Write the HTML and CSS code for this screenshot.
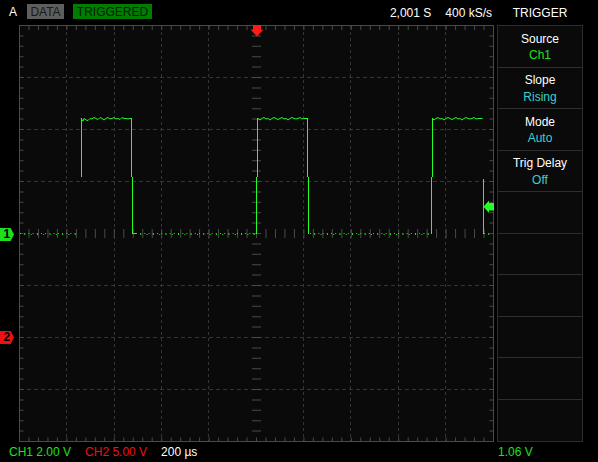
FILE: index.html
```html
<!DOCTYPE html>
<html>
<head>
<meta charset="utf-8">
<link rel="stylesheet" href="styles.css">
</head>
<body>
<div class="scope">
  <header class="top">
    <div class="top-main">
      <div class="status">
        <span class="chan">A</span>
        <span class="badge badge-data">DATA</span>
        <span class="badge badge-trig">TRIGGERED</span>
      </div>
      <div class="metrics">
        <span>2,001 S</span>
        <span>400 kS/s</span>
      </div>
    </div>
    <div class="menu-title">TRIGGER</div>
  </header>

  <main class="main">
    <div class="markers">
      <div class="mk mk1">1</div>
      <div class="mk mk2">2</div>
    </div>

    <svg class="grat" viewBox="19 25 475 417" xmlns="http://www.w3.org/2000/svg">
      <rect x="19" y="25" width="475" height="417" fill="#0a0a0a"/>
      <g stroke="#363636" stroke-width="1" fill="none">
        <path stroke-dasharray="3 3" d="M66.5 26V441M114.5 26V441M161.5 26V441M208.5 26V441M303.5 26V441M350.5 26V441M398.5 26V441M445.5 26V441"/>
        <path stroke-dasharray="4 3" d="M20 77.5H493M20 129.5H493M20 181.5H493M20 285.5H493M20 337.5H493M20 389.5H493"/>
      </g>
      <g stroke="#4a4a4a" fill="none">
        <line x1="19" y1="28" x2="494" y2="28" stroke-width="4" stroke-dasharray="1 8.48"/>
        <line x1="19" y1="439.5" x2="494" y2="439.5" stroke-width="4" stroke-dasharray="1 8.48"/>
        <line x1="21.5" y1="25" x2="21.5" y2="442" stroke-width="4" stroke-dasharray="1 9.4"/>
        <line x1="491.5" y1="25" x2="491.5" y2="442" stroke-width="4" stroke-dasharray="1 9.4"/>
        <line x1="256.5" y1="25" x2="256.5" y2="442" stroke-width="9" stroke-dasharray="1 9.4"/>
        <line x1="19" y1="233.5" x2="494" y2="233.5" stroke-width="9" stroke-dasharray="1 8.48"/>
        <rect x="19.5" y="25.5" width="474" height="416" stroke-width="1"/>
      </g>

      <g stroke="#22ff22" stroke-width="1" fill="none" shape-rendering="crispEdges">
        <path d="M81.5 118V177M131.5 118V177M132.5 177V234M256.5 234V177M257.5 177V118M307.5 118V177M308.5 177V234M431.5 234V177M432.5 177V118M483.5 179V234"/>
      </g>
      <g stroke="#22ff22" stroke-width="1" fill="none">
        <polyline points="81,118.5 83,121 84,118.5 86,120 88,120.5 90,118.5 92,119 94,117.5 96,118.5 98,119.5 100,117.5 102,118.5 104,120 106,118.5 108,117.5 110,119 112,118.5 114,117.5 116,119 118,118.5 120,119.5 122,117.5 124,118.5 126,118.5 128,119 130,118.5 131.5,118.5"/>
        <polyline points="258,118.5 260,120 262,118.5 264,117.5 266,119 268,118.5 270,120 272,118.5 274,117.5 276,118.5 278,119.5 280,118.5 282,117.5 284,119 286,118.5 288,120 290,118.5 292,117.5 294,118.5 296,119 298,118.5 300,117.5 302,119 304,118.5 306,118.5 307.5,118.5"/>
        <polyline points="432.5,118.5 434,120 436,118.5 438,117.5 440,119 442,118.5 444,120 446,118.5 448,117.5 450,118.5 452,119.5 454,118.5 456,117.5 458,119 460,118.5 462,120 464,118.5 466,117.5 468,118.5 470,119 472,118.5 474,117.5 476,119 478,118.5 480,118.5 482.5,118.5"/>
        <path d="M132.5 233.5H136"/>
      </g>
      <g stroke="#22ee22" stroke-width="1" fill="none" stroke-dasharray="1 3.2">
        <path d="M20 233.5H76M136 233.5H255M310 233.5H430M484 233.5H490"/>
      </g>
      <g stroke="#22ee22" stroke-width="1" fill="none" stroke-dasharray="1 5.3" stroke-dashoffset="2">
        <path d="M20 234.5H76M136 234.5H255M310 234.5H430M484 234.5H490"/>
      </g>

      <polygon points="253,25 261,25 261,29.5 263.5,29.5 257,36.5 250.5,29.5 253,29.5" fill="#ff1a1a"/>
      <polygon points="483.5,206.75 489,200.5 489,203 494,203 494,210.5 489,210.5 489,213" fill="#22ff22"/>
    </svg>

    <aside class="panel">
      <div class="row"><div class="label">Source</div><div class="value v-ch">Ch1</div></div>
      <div class="row"><div class="label">Slope</div><div class="value">Rising</div></div>
      <div class="row"><div class="label">Mode</div><div class="value">Auto</div></div>
      <div class="row"><div class="label">Trig Delay</div><div class="value">Off</div></div>
      <div class="row"></div>
      <div class="row"></div>
      <div class="row"></div>
      <div class="row"></div>
      <div class="row"></div>
      <div class="row"></div>
    </aside>
  </main>

  <footer class="bottom">
    <div class="foot-left">
      <span class="c1">CH1 2.00 V</span>
      <span class="c2">CH2 5.00 V</span>
      <span>200 µs</span>
    </div>
    <span class="level">1.06 V</span>
  </footer>
</div>
</body>
</html>
```

FILE: styles.css
```css
html, body {
  margin: 0;
  padding: 0;
  background: #000;
}

body {
  width: 598px;
  height: 462px;
  overflow: hidden;
  font-family: "Liberation Sans", Arial, sans-serif;
  font-size: 12px;
  color: #ffffff;
}

.scope {
  width: 598px;
  height: 462px;
}

.top {
  height: 25px;
  display: flex;
}

.top-main {
  width: 497px;
  box-sizing: border-box;
  padding: 4px 5px 0 9px;
  display: flex;
  justify-content: space-between;
  align-items: flex-start;
}

.status {
  display: flex;
  align-items: flex-start;
}

.chan {
  line-height: 16px;
  margin-right: 10px;
}

.badge {
  height: 15px;
  line-height: 16px;
  text-align: center;
}

.badge-data {
  width: 37px;
  background: #5e5e5e;
  color: #1a1a1a;
  margin-right: 9px;
}

.badge-trig {
  width: 79px;
  background: #007c00;
  color: #001e00;
}

.metrics {
  display: flex;
  gap: 14px;
  line-height: 16px;
  padding-top: 1px;
}

.menu-title {
  width: 86px;
  text-align: center;
  padding-top: 5px;
  line-height: 16px;
}

.main {
  display: flex;
  height: 417px;
}

.markers {
  width: 19px;
  position: relative;
}

.mk {
  position: absolute;
  left: 0;
  width: 14px;
  height: 13px;
  box-sizing: border-box;
  padding-left: 3.5px;
  clip-path: polygon(0 0, 76% 0, 100% 50%, 76% 100%, 0 100%);
  color: #000;
  font-weight: bold;
  font-size: 12px;
  line-height: 13px;
}

.mk1 {
  top: 203px;
  background: #1ee01e;
}

.mk2 {
  top: 306px;
  background: #ee1111;
}

.grat {
  display: block;
  width: 475px;
  height: 417px;
}

.panel {
  margin-left: 3px;
  width: 86px;
  height: 417px;
  box-sizing: border-box;
  border: 1px solid #2c2c2c;
  background: #0a0a0a;
  display: grid;
  grid-template-rows: repeat(10, 1fr);
}

.row {
  border-bottom: 1px solid #2e2e2e;
  text-align: center;
  padding-top: 4.5px;
  line-height: 16.7px;
  box-sizing: border-box;
}

.row:last-child {
  border-bottom: none;
}

.value {
  color: #3ccfcf;
}

.value.v-ch {
  color: #1ee01e;
}

.bottom {
  height: 20px;
  box-sizing: border-box;
  padding: 2px 0 0 9px;
  display: flex;
  line-height: 16px;
}

.foot-left {
  width: 488px;
  display: flex;
  gap: 14px;
}

.c1 {
  color: #1ee01e;
}

.c2 {
  color: #ee1111;
}

.level {
  color: #1ee01e;
  padding-left: 1px;
}
```
